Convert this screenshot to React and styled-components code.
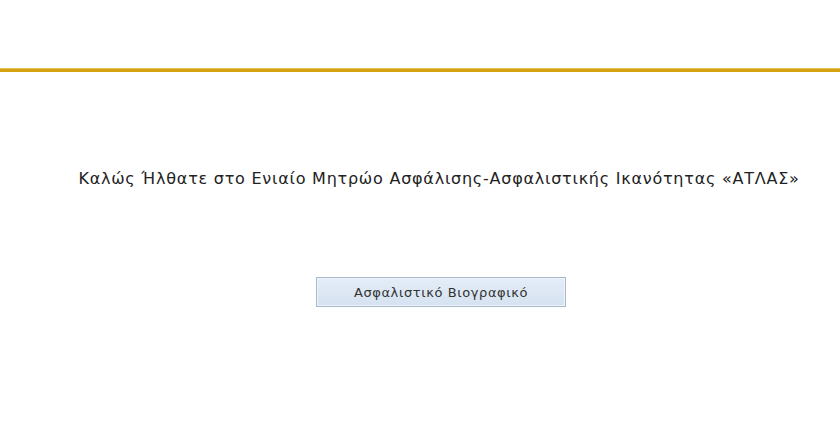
import styled, { createGlobalStyle } from 'styled-components';

const GlobalStyle = createGlobalStyle`
    html, body{
        margin:0;
        padding:0;
        background-color:#fff;
    }
    body{
        font-family:Verdana, "DejaVu Sans", sans-serif;
    }
`;

const Page = styled.div`
    width:840px;
    height:440px;
    display:flex;
    flex-direction:column;
    overflow:hidden;
`;

const Header = styled.div`
    height:68px;
`;

const GoldLine = styled.div`
    height:4px;
    background-color:#d4a20f;
    border-top:1px solid #e6c25a;
    box-sizing:border-box;
`;

const Main = styled.div`
    display:flex;
    flex-direction:column;
    align-items:center;
    padding-left:38px;
    padding-top:97px;
`;

const Welcome = styled.h1`
    margin:0;
    font-size:16px;
    font-weight:normal;
    letter-spacing:0.76px;
    line-height:20px;
    color:#222;
    white-space:nowrap;
`;

const Button = styled.button`
    margin-top:88px;
    margin-left:4px;
    width:250px;
    height:30px;
    font-family:inherit;
    font-size:13px;
    letter-spacing:0.6px;
    color:#333;
    border:1px solid #a9b9cc;
    border-radius:0px;
    background:linear-gradient(to bottom, #e4edf8 0%, #d6e2f0 100%);
    cursor:pointer;
    outline:0px;
    box-shadow:inset 0 0 0 1px #eef3fa;

    &:hover{
        background:linear-gradient(to bottom, #d9e5f4 0%, #c8d8ec 100%);
    }
`;

const App = ()=>{
    return(
        <Page>
            <GlobalStyle/>
            <Header/>
            <GoldLine/>
            <Main>
                <Welcome>Καλώς Ήλθατε στο Ενιαίο Μητρώο Ασφάλισης-Ασφαλιστικής Ικανότητας «ΑΤΛΑΣ»</Welcome>
                <Button>Ασφαλιστικό Βιογραφικό</Button>
            </Main>
        </Page>
    )
}

export default App;
